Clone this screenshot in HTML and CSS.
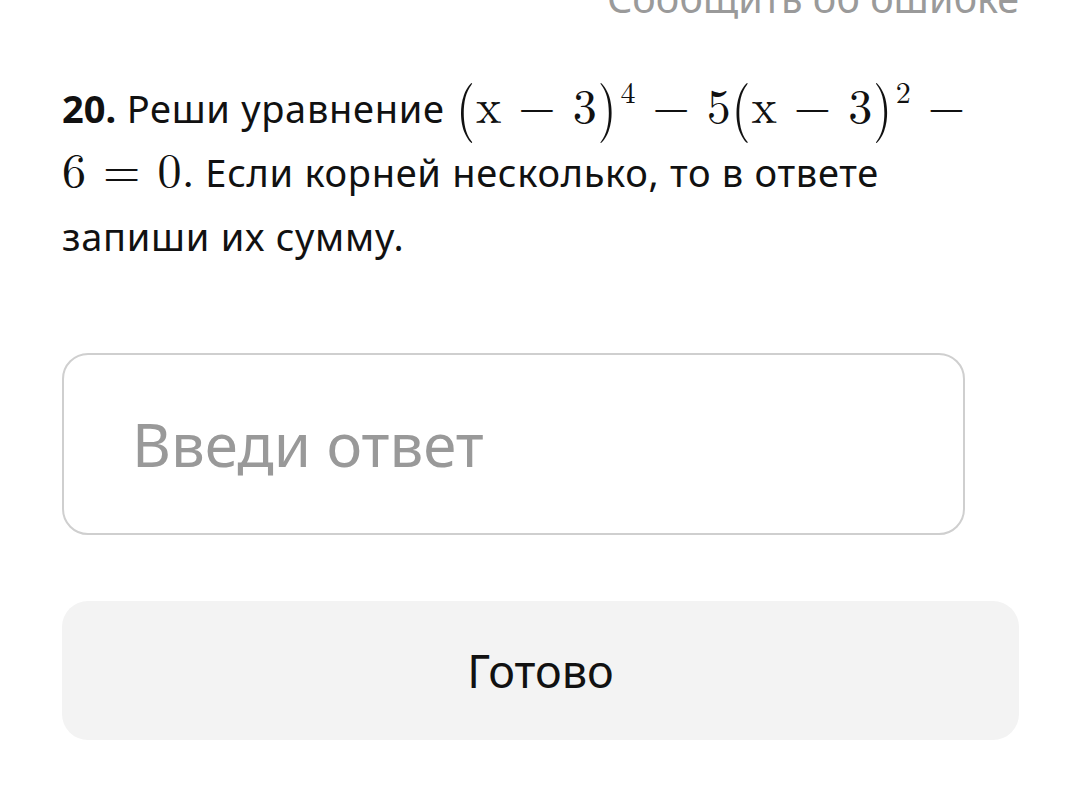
FILE: index.html
```html
<!doctype html>
<html>
<head>
    <meta charset="utf-8"/>
    <title>Задание 20</title>
    <link rel="stylesheet" href="styles.css">
</head>
<body>

<div class="page">
    <div class="report"><a href="#">Сообщить об ошибке</a></div>

    <div class="task">
        <b>20.</b> Реши уравнение
        <span class="m"><span class="p">(</span>x<span class="op">&minus;</span>3<span class="p">)</span><sup>4</sup><span class="op">&minus;</span>5<span class="p">(</span>x<span class="op">&minus;</span>3<span class="p">)</span><sup>2</sup><span class="op">&minus;</span></span>
        <span class="m">6<span class="op">=</span>0.</span> Если корней несколько, то в ответе запиши их сумму.
    </div>

    <div class="answer">
        <input type="text" class="answer-input" placeholder="Введи ответ">
    </div>

    <button type="button" class="btn">Готово</button>
</div>

</body>
</html>
```

FILE: styles.css
```css
*{margin:0;padding:0;box-sizing:border-box}
body{font-family:"Noto Sans","Open Sans",sans-serif;color:#111;background:#fff}

.page{width:1080px;padding:0 61px 0 62px}

/* link at the top, mostly scrolled away */
.report{text-align:right;height:40px;margin-top:-22px;font-size:39.5px;line-height:40px}
.report a{color:#9a9a9a;text-decoration:none}

.task{margin-top:58px;font-size:38px;letter-spacing:.7px;line-height:64px;width:957px}
.task b{font-weight:700;letter-spacing:0}

/* formula */
.m{font-family:"Latin Modern Roman","Liberation Serif",serif;font-size:48px;letter-spacing:0;line-height:1;white-space:nowrap}
.m .op{margin:0 17px}
.m .p{display:inline-block;transform:scaleY(1.25);margin:0 1px}
.m sup{font-size:30px;line-height:0;vertical-align:20px;margin-left:3px}

.answer{margin-top:85px;width:903px}
.answer-input{display:block;width:100%;height:182px;border:2px solid #cfcfcf;border-radius:26px;padding:0 68px;font-family:inherit;font-size:60px;color:#111;background:#fff;outline:none}
.answer-input::placeholder{color:#999}

.btn{display:block;margin-top:66px;width:957px;height:139px;border:0;border-radius:26px;background:#f3f3f3;font-family:inherit;font-size:45px;color:#111;cursor:pointer}
```
